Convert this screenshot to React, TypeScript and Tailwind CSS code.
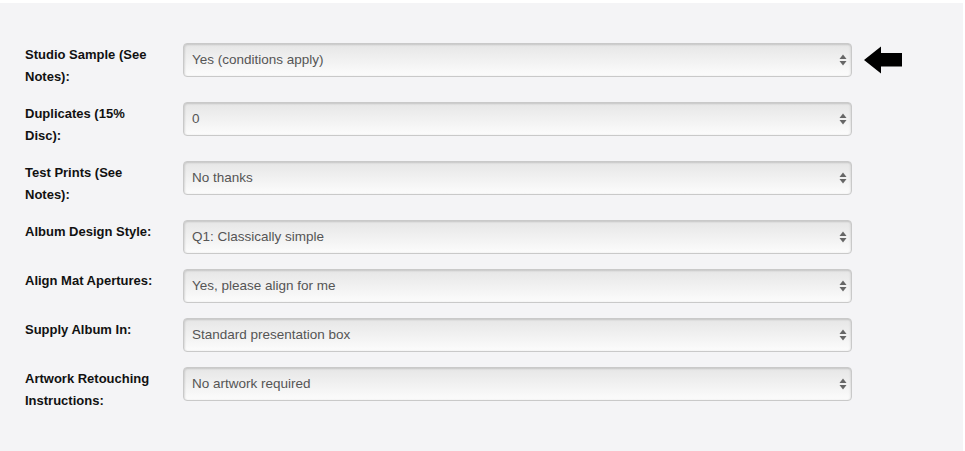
const rows = [
  { label: "Studio Sample (See Notes):", value: "Yes (conditions apply)", arrow: true },
  { label: "Duplicates (15% Disc):", value: "0" },
  { label: "Test Prints (See Notes):", value: "No thanks" },
  { label: "Album Design Style:", value: "Q1: Classically simple" },
  { label: "Align Mat Apertures:", value: "Yes, please align for me" },
  { label: "Supply Album In:", value: "Standard presentation box" },
  { label: "Artwork Retouching Instructions:", value: "No artwork required" },
]

function Arrows() {
  return (
    <svg width="8" height="14" viewBox="0 0 8 14" className="absolute right-[5px] top-1/2 -translate-y-1/2 pointer-events-none">
      <path d="M4 1.5 L7.5 6 L0.5 6 Z" fill="#666" />
      <path d="M4 12.5 L7.5 8 L0.5 8 Z" fill="#666" />
    </svg>
  )
}

function BigArrow() {
  return (
    <svg width="40" height="28" viewBox="0 0 40 28" className="ml-[12px]">
      <path d="M0 14 L17 0.5 L17 7 L38 7 L38 20.5 L17 20.5 L17 27.5 Z" fill="#000" />
    </svg>
  )
}

function App() {
  return (
    <div className="w-[965px] h-[451px] bg-white pt-[3px] pr-[2px]" style={{ fontFamily: '"Liberation Sans", Arial, sans-serif' }}>
      <div className="w-full h-full bg-[#f4f4f6] pt-[40px] pl-[25px]">
        {rows.map((row) => (
          <div key={row.label} className="flex items-start mb-[15px]">
            <label className="w-[134px] mr-[24px] pt-[1px] -mb-[1px] text-[13px] leading-[22px] font-bold text-[#111]">
              {row.label}
            </label>
            <div className="relative w-[669px] h-[34px]">
              <select
                defaultValue={row.value}
                className="appearance-none w-full h-full rounded-[4px] border border-[#c9c9c9] bg-gradient-to-b from-[#e6e6e6] to-[#fcfcfc] pl-[8px] text-[13.5px] text-[#555] shadow-[inset_1px_1px_2px_rgba(0,0,0,0.12),inset_-1px_0_2px_rgba(0,0,0,0.08)] outline-none"
              >
                <option>{row.value}</option>
              </select>
              <Arrows />
            </div>
            {row.arrow && (
              <div className="h-[34px] flex items-center">
                <BigArrow />
              </div>
            )}
          </div>
        ))}
      </div>
    </div>
  )
}

export default App
